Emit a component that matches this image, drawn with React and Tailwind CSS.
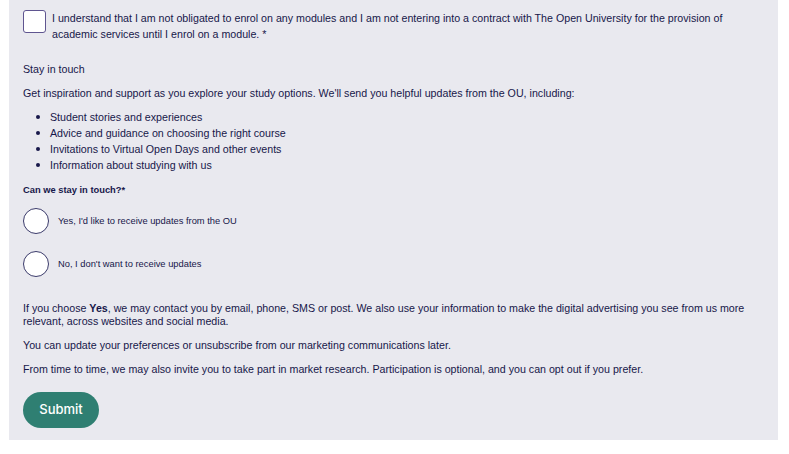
import React, { useState } from "react";

const bullets = [
  "Student stories and experiences",
  "Advice and guidance on choosing the right course",
  "Invitations to Virtual Open Days and other events",
  "Information about studying with us",
];

const options = [
  { id: "yes", label: "Yes, I'd like to receive updates from the OU" },
  { id: "no", label: "No, I don't want to receive updates" },
];

const App = () => {
  const [agreed, setAgreed] = useState(false);
  const [touch, setTouch] = useState();

  return (
    <div className="bg-white h-[454px] pl-[9px] pr-[11px] font-['Liberation_Sans',Arial,sans-serif] text-[#17174a]">
      <form
        className="bg-[#e9e9ef] h-[440px] px-[14px] pt-[10px]"
        onSubmit={(e) => e.preventDefault()}
      >
        <label className="flex items-start gap-[6px] cursor-pointer">
          <input
            type="checkbox"
            checked={agreed}
            onChange={(e) => setAgreed(e.target.checked)}
            className="appearance-none shrink-0 w-[23px] h-[23px] bg-white border border-[#5f5590] rounded-[3px]"
          />
          <span className="text-[10.67px] leading-[16px]">
            I understand that I am not obligated to enrol on any modules and I am not entering into a contract with The Open
            University for the provision of academic services until I enrol on a module. *
          </span>
        </label>

        <p className="mt-[19px] text-[10.67px] leading-[16px]">Stay in touch</p>
        <p className="mt-[8px] text-[10.67px] leading-[16px]">
          Get inspiration and support as you explore your study options. We'll send you helpful updates from the OU, including:
        </p>

        <ul className="mt-[8px]">
          {bullets.map((b) => (
            <li key={b} className="flex items-center text-[10.67px] leading-[16px]">
              <span className="ml-[13px] mr-[10px] w-[4px] h-[4px] rounded-full bg-[#17174a]" />
              {b}
            </li>
          ))}
        </ul>

        <p className="mt-[9px] text-[9.33px] leading-[16px] font-bold">Can we stay in touch?*</p>

        <div className="mt-[10px] flex flex-col gap-[17px]">
          {options.map((o) => (
            <label key={o.id} className="flex items-center gap-[9px] cursor-pointer">
              <input
                type="radio"
                name="touch"
                checked={touch === o.id}
                onChange={() => setTouch(o.id)}
                className="appearance-none shrink-0 w-[26px] h-[26px] bg-white border-[1.5px] border-[#3b3b6b] rounded-full checked:border-[7px]"
              />
              <span className="text-[9.33px] leading-[12px]">{o.label}</span>
            </label>
          ))}
        </div>

        <p className="mt-[25px] text-[10.67px] leading-[13px]">
          If you choose <b>Yes</b>, we may contact you by email, phone, SMS or post. We also use your information to make the
          digital advertising you see from us more relevant, across websites and social media.
        </p>
        <p className="mt-[9px] text-[10.67px] leading-[16px]">
          You can update your preferences or unsubscribe from our marketing communications later.
        </p>
        <p className="mt-[8px] text-[10.67px] leading-[16px]">
          From time to time, we may also invite you to take part in market research. Participation is optional, and you can opt
          out if you prefer.
        </p>

        <button
          type="submit"
          className="mt-[15px] w-[76px] h-[36px] rounded-full bg-[#2f7f72] text-white text-[13px] font-medium font-['Inter',sans-serif]"
        >
          Submit
        </button>
      </form>
    </div>
  );
};

export default App;
